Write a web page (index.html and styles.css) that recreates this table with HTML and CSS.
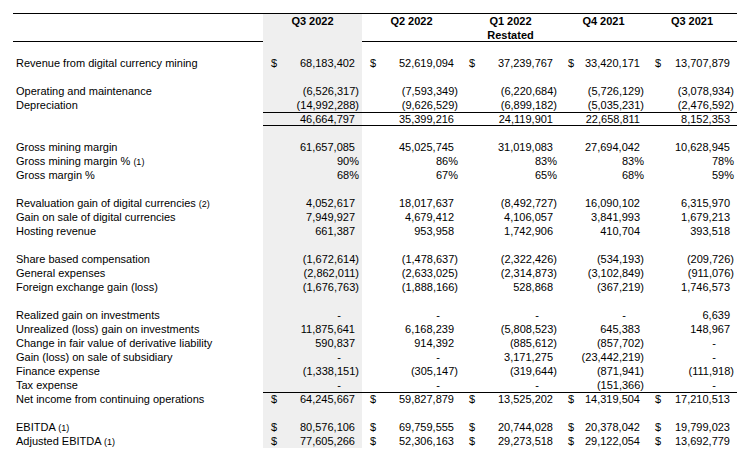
FILE: index.html
```html
<!DOCTYPE html>
<html>
<head>
<meta charset="utf-8">
<link rel="stylesheet" href="styles.css">
</head>
<body>
<div class="sheet">
  <div class="row head">
    <div class="lbl"></div>
    <div class="c c1"><b>Q3 2022</b></div>
    <div class="c"><b>Q2 2022</b></div>
    <div class="c"><b>Q1 2022<br>Restated</b></div>
    <div class="c"><b>Q4 2021</b></div>
    <div class="c"><b>Q3 2021</b></div>
  </div>
  <div class="row"><div class="lbl"></div><div class="c c1"></div><div class="c"></div><div class="c"></div><div class="c"></div><div class="c"></div></div>

  <div class="row">
    <div class="lbl">Revenue from digital currency mining</div>
    <div class="c c1 m"><span>$</span><span class="p">68,183,402</span></div>
    <div class="c m"><span>$</span><span class="p">52,619,094</span></div>
    <div class="c m"><span>$</span><span class="p">37,239,767</span></div>
    <div class="c m"><span>$</span><span class="p">33,420,171</span></div>
    <div class="c m"><span>$</span><span class="p">13,707,879</span></div>
  </div>
  <div class="row"><div class="lbl"></div><div class="c c1"></div><div class="c"></div><div class="c"></div><div class="c"></div><div class="c"></div></div>
  <div class="row">
    <div class="lbl">Operating and maintenance</div>
    <div class="c c1 n">(6,526,317)</div>
    <div class="c n">(7,593,349)</div>
    <div class="c n">(6,220,684)</div>
    <div class="c n">(5,726,129)</div>
    <div class="c n">(3,078,934)</div>
  </div>
  <div class="row">
    <div class="lbl">Depreciation</div>
    <div class="c c1 n">(14,992,288)</div>
    <div class="c n">(9,626,529)</div>
    <div class="c n">(6,899,182)</div>
    <div class="c n">(5,035,231)</div>
    <div class="c n">(2,476,592)</div>
  </div>
  <div class="row sum">
    <div class="lbl"></div>
    <div class="c c1 p">46,664,797</div>
    <div class="c p">35,399,216</div>
    <div class="c p">24,119,901</div>
    <div class="c p">22,658,811</div>
    <div class="c p">8,152,353</div>
  </div>
  <div class="row"><div class="lbl"></div><div class="c c1"></div><div class="c"></div><div class="c"></div><div class="c"></div><div class="c"></div></div>

  <div class="row">
    <div class="lbl">Gross mining margin</div>
    <div class="c c1 p">61,657,085</div>
    <div class="c p">45,025,745</div>
    <div class="c p">31,019,083</div>
    <div class="c p">27,694,042</div>
    <div class="c p">10,628,945</div>
  </div>
  <div class="row">
    <div class="lbl">Gross mining margin % <small>(1)</small></div>
    <div class="c c1 n">90%</div>
    <div class="c n">86%</div>
    <div class="c n">83%</div>
    <div class="c n">83%</div>
    <div class="c n">78%</div>
  </div>
  <div class="row">
    <div class="lbl">Gross margin %</div>
    <div class="c c1 n">68%</div>
    <div class="c n">67%</div>
    <div class="c n">65%</div>
    <div class="c n">68%</div>
    <div class="c n">59%</div>
  </div>
  <div class="row"><div class="lbl"></div><div class="c c1"></div><div class="c"></div><div class="c"></div><div class="c"></div><div class="c"></div></div>

  <div class="row">
    <div class="lbl">Revaluation gain of digital currencies <small>(2)</small></div>
    <div class="c c1 p">4,052,617</div>
    <div class="c p">18,017,637</div>
    <div class="c n">(8,492,727)</div>
    <div class="c p">16,090,102</div>
    <div class="c p">6,315,970</div>
  </div>
  <div class="row">
    <div class="lbl">Gain on sale of digital currencies</div>
    <div class="c c1 p">7,949,927</div>
    <div class="c p">4,679,412</div>
    <div class="c p">4,106,057</div>
    <div class="c p">3,841,993</div>
    <div class="c p">1,679,213</div>
  </div>
  <div class="row">
    <div class="lbl">Hosting revenue</div>
    <div class="c c1 p">661,387</div>
    <div class="c p">953,958</div>
    <div class="c p">1,742,906</div>
    <div class="c p">410,704</div>
    <div class="c p">393,518</div>
  </div>
  <div class="row"><div class="lbl"></div><div class="c c1"></div><div class="c"></div><div class="c"></div><div class="c"></div><div class="c"></div></div>

  <div class="row">
    <div class="lbl">Share based compensation</div>
    <div class="c c1 n">(1,672,614)</div>
    <div class="c n">(1,478,637)</div>
    <div class="c n">(2,322,426)</div>
    <div class="c n">(534,193)</div>
    <div class="c n">(209,726)</div>
  </div>
  <div class="row">
    <div class="lbl">General expenses</div>
    <div class="c c1 n">(2,862,011)</div>
    <div class="c n">(2,633,025)</div>
    <div class="c n">(2,314,873)</div>
    <div class="c n">(3,102,849)</div>
    <div class="c n">(911,076)</div>
  </div>
  <div class="row">
    <div class="lbl">Foreign exchange gain (loss)</div>
    <div class="c c1 n">(1,676,763)</div>
    <div class="c n">(1,888,166)</div>
    <div class="c p">528,868</div>
    <div class="c n">(367,219)</div>
    <div class="c p">1,746,573</div>
  </div>
  <div class="row"><div class="lbl"></div><div class="c c1"></div><div class="c"></div><div class="c"></div><div class="c"></div><div class="c"></div></div>

  <div class="row">
    <div class="lbl">Realized gain on investments</div>
    <div class="c c1 d">-</div>
    <div class="c d">-</div>
    <div class="c d">-</div>
    <div class="c d">-</div>
    <div class="c p">6,639</div>
  </div>
  <div class="row">
    <div class="lbl">Unrealized (loss) gain on investments</div>
    <div class="c c1 p">11,875,641</div>
    <div class="c p">6,168,239</div>
    <div class="c n">(5,808,523)</div>
    <div class="c p">645,383</div>
    <div class="c p">148,967</div>
  </div>
  <div class="row">
    <div class="lbl">Change in fair value of derivative liability</div>
    <div class="c c1 p">590,837</div>
    <div class="c p">914,392</div>
    <div class="c n">(885,612)</div>
    <div class="c n">(857,702)</div>
    <div class="c d">-</div>
  </div>
  <div class="row">
    <div class="lbl">Gain (loss) on sale of subsidiary</div>
    <div class="c c1 d">-</div>
    <div class="c d">-</div>
    <div class="c p">3,171,275</div>
    <div class="c n">(23,442,219)</div>
    <div class="c d">-</div>
  </div>
  <div class="row">
    <div class="lbl">Finance expense</div>
    <div class="c c1 n">(1,338,151)</div>
    <div class="c n">(305,147)</div>
    <div class="c n">(319,644)</div>
    <div class="c n">(871,941)</div>
    <div class="c n">(111,918)</div>
  </div>
  <div class="row">
    <div class="lbl">Tax expense</div>
    <div class="c c1 d">-</div>
    <div class="c d">-</div>
    <div class="c d">-</div>
    <div class="c n">(151,366)</div>
    <div class="c d">-</div>
  </div>
  <div class="row total">
    <div class="lbl">Net income from continuing operations</div>
    <div class="c c1 m"><span>$</span><span class="p">64,245,667</span></div>
    <div class="c m"><span>$</span><span class="p">59,827,879</span></div>
    <div class="c m"><span>$</span><span class="p">13,525,202</span></div>
    <div class="c m"><span>$</span><span class="p">14,319,504</span></div>
    <div class="c m"><span>$</span><span class="p">17,210,513</span></div>
  </div>
  <div class="row"><div class="lbl"></div><div class="c c1"></div><div class="c"></div><div class="c"></div><div class="c"></div><div class="c"></div></div>
  <div class="row">
    <div class="lbl">EBITDA <small>(1)</small></div>
    <div class="c c1 m"><span>$</span><span class="p">80,576,106</span></div>
    <div class="c m"><span>$</span><span class="p">69,759,555</span></div>
    <div class="c m"><span>$</span><span class="p">20,744,028</span></div>
    <div class="c m"><span>$</span><span class="p">20,378,042</span></div>
    <div class="c m"><span>$</span><span class="p">19,799,023</span></div>
  </div>
  <div class="row">
    <div class="lbl">Adjusted EBITDA <small>(1)</small></div>
    <div class="c c1 m"><span>$</span><span class="p">77,605,266</span></div>
    <div class="c m"><span>$</span><span class="p">52,306,163</span></div>
    <div class="c m"><span>$</span><span class="p">29,273,518</span></div>
    <div class="c m"><span>$</span><span class="p">29,122,054</span></div>
    <div class="c m"><span>$</span><span class="p">13,692,779</span></div>
  </div>
</div>
</body>
</html>
```

FILE: styles.css
```css
html, body {
  margin: 0;
  padding: 0;
  background: #ffffff;
}
body {
  font-family: "Liberation Sans", Arial, sans-serif;
  font-size: 11px;
  color: #000000;
}
.sheet {
  margin: 13px 0 0 13px;
  width: 724px;
  border-top: 1px solid #000000;
}
.row {
  display: grid;
  grid-template-columns: 250px 99px 99px 99px 87px 90px;
  height: 14px;
  line-height: 14px;
}
.row.head {
  height: 27px;
  border-bottom: 1px solid #000000;
}
.head .c {
  text-align: center;
  line-height: 14px;
}
.head b {
  font-weight: bold;
}
.lbl {
  padding-left: 3px;
  white-space: nowrap;
}
.lbl small {
  font-size: 9px;
}
.c {
  white-space: nowrap;
  text-align: right;
  box-sizing: border-box;
}
.c1 {
  background: #efefef;
}
.p { padding-right: 7px; }
.n { padding-right: 3px; }
.d { padding-right: 21px; }
.m {
  display: flex;
  justify-content: space-between;
  padding-left: 8px;
}
.m .p { padding-right: 7px; }
.sum .c {
  border-top: 1px solid #000000;
  border-bottom: 1px solid #000000;
  line-height: 12px;
}
.total .c {
  border-top: 1px solid #000000;
  line-height: 13px;
}
```
